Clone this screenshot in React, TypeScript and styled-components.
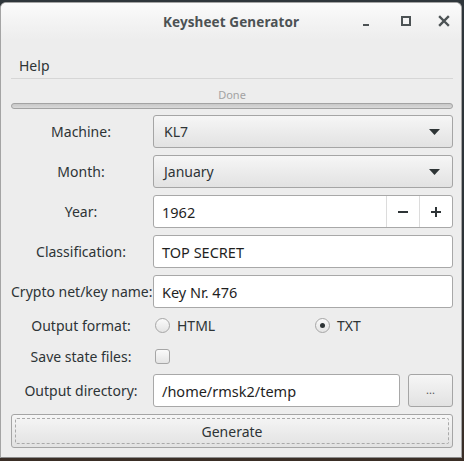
import styled, { createGlobalStyle } from "styled-components";

const GlobalStyle = createGlobalStyle`
  html, body {
    margin: 0;
    padding: 0;
    width: 464px;
    height: 461px;
    overflow: hidden;
    background: linear-gradient(180deg, #2f363b 0%, #2c3236 60%, #3a2e26 100%);
    font-family: "Noto Sans", "DejaVu Sans", sans-serif;
  }
`;

const Window = styled.div`
  margin-top: 2px;
  width: 462px;
  height: 456px;
  box-sizing: border-box;
  border: 1px solid #a4a4a4;
  border-bottom-color: #8c8c8c;
  border-radius: 6px 6px 0 0;
  background: #ededed;
  display: flex;
  flex-direction: column;
  overflow: hidden;
`;

const TitleBar = styled.div`
  height: 37px;
  flex: none;
  display: flex;
  align-items: center;
  justify-content: center;
  position: relative;
  background: linear-gradient(180deg, #fbfbfb 0%, #f2f2f2 60%, #ededed 100%);
`;

const Title = styled.div`
  font-weight: bold;
  font-size: 13.5px;
  color: #4c5254;
  letter-spacing: 0.1px;
`;

const WinButtons = styled.div`
  position: absolute;
  right: 10px;
  top: 11px;
  display: flex;
  gap: 24px;
  align-items: center;
`;

const WinButton = styled.span`
  width: 14px;
  height: 14px;
  display: flex;
  align-items: center;
  justify-content: center;
`;

const MenuBar = styled.div`
  height: 38px;
  flex: none;
  box-sizing: border-box;
  padding: 16px 0 0 18px;
  font-size: 14px;
  color: #2e3436;
`;

const Body = styled.div`
  flex: 1;
  display: flex;
  flex-direction: column;
  padding: 0 8px 0 10px;
`;

const Separator = styled.div`
  height: 1px;
  background: #d6d6d6;
`;

const StatusText = styled.div`
  margin-top: 9px;
  height: 14px;
  line-height: 14px;
  text-align: center;
  font-size: 11px;
  color: #a3a3a3;
`;

const Trough = styled.div`
  margin-top: 1px;
  height: 6px;
  box-sizing: border-box;
  border: 1px solid #a3a3a3;
  border-radius: 3px;
  background: linear-gradient(180deg, #c8c8c8, #d9d9d9);
`;

const Form = styled.div`
  margin-top: 6px;
  display: flex;
  flex-direction: column;
  gap: 7px;
`;

const Row = styled.div<{ $h: number; $pt?: number }>`
  height: ${(p) => p.$h}px;
  display: flex;
  align-items: center;
  box-sizing: border-box;
  padding-top: ${(p) => p.$pt ?? 0}px;
`;

const Label = styled.div`
  width: 140px;
  flex: none;
  margin-right: 2px;
  text-align: center;
  white-space: nowrap;
  font-size: 14px;
  color: #2e3436;
`;

const Combo = styled.div`
  flex: 1;
  height: 100%;
  box-sizing: border-box;
  border: 1px solid #a5a5a5;
  border-radius: 3px;
  background: linear-gradient(180deg, #f6f6f6 0%, #ececec 50%, #e2e2e2 100%);
  display: flex;
  align-items: center;
  justify-content: space-between;
  padding: 0 12px 0 10px;
  font-size: 14px;
  color: #2e3436;
`;

const Entry = styled.div`
  flex: 1;
  height: 100%;
  box-sizing: border-box;
  border: 1px solid #a8a8a8;
  border-radius: 3px;
  background: #ffffff;
  display: flex;
  align-items: center;
  font-size: 14.5px;
  color: #1f1f1f;
  overflow: hidden;
`;

const EntryText = styled.span`
  flex: 1;
  padding-left: 8px;
`;

const SpinButton = styled.div`
  width: 32px;
  height: 100%;
  border-left: 1px solid #dcdcdc;
  display: flex;
  align-items: center;
  justify-content: center;
`;

const RadioGroup = styled.div`
  display: flex;
  padding-left: 2px;
`;

const RadioItem = styled.div<{ $w?: number }>`
  width: ${(p) => (p.$w ? `${p.$w}px` : "auto")};
  display: flex;
  align-items: center;
  gap: 7px;
  font-size: 14px;
  color: #2e3436;
`;

const Radio = styled.span`
  width: 15px;
  height: 15px;
  box-sizing: border-box;
  border: 1px solid #a6a6a6;
  border-radius: 50%;
  background: linear-gradient(180deg, #fafafa, #e4e4e4);
  display: flex;
  align-items: center;
  justify-content: center;
`;

const Dot = styled.span`
  width: 5px;
  height: 5px;
  border-radius: 50%;
  background: #2e3436;
`;

const Check = styled.span`
  margin-left: 2px;
  width: 15px;
  height: 15px;
  box-sizing: border-box;
  border: 1px solid #a6a6a6;
  border-radius: 3px;
  background: linear-gradient(180deg, #fafafa, #e4e4e4);
`;

const Button = styled.div<{ $w?: number }>`
  ${(p) => (p.$w ? `width: ${p.$w}px; flex: none;` : "flex: 1;")}
  height: 100%;
  box-sizing: border-box;
  border: 1px solid #a5a5a5;
  border-radius: 3px;
  background: linear-gradient(180deg, #f6f6f6 0%, #ececec 50%, #e2e2e2 100%);
  display: flex;
  align-items: center;
  justify-content: center;
  font-size: 14px;
  color: #2e3436;
`;

const SmallButton = styled(Button)`
  margin-left: 8px;
  font-size: 11px;
  color: #555;
  padding-bottom: 2px;
`;

const FocusRing = styled.div`
  width: calc(100% - 6px);
  height: calc(100% - 6px);
  box-sizing: border-box;
  border: 1px dashed #a9a9a9;
  border-radius: 2px;
  display: flex;
  align-items: center;
  justify-content: center;
`;

const Arrow = () => (
  <svg width="11" height="6" viewBox="0 0 11 6">
    <path d="M0 0 H11 L5.5 6 Z" fill="#2e3436" />
  </svg>
);

const App = () => {
  return (
    <>
      <GlobalStyle />
      <Window>
        <TitleBar>
          <Title>Keysheet Generator</Title>
          <WinButtons>
            <WinButton>
              <svg width="14" height="14" viewBox="0 0 14 14">
                <rect x="2" y="10" width="6" height="2" fill="#4c5254" />
              </svg>
            </WinButton>
            <WinButton>
              <svg width="14" height="14" viewBox="0 0 14 14">
                <rect x="3" y="3" width="8" height="8" fill="none" stroke="#4c5254" strokeWidth="2" />
              </svg>
            </WinButton>
            <WinButton>
              <svg width="14" height="14" viewBox="0 0 14 14">
                <path d="M3 3 L11 11 M11 3 L3 11" stroke="#4c5254" strokeWidth="2.4" strokeLinecap="square" />
              </svg>
            </WinButton>
          </WinButtons>
        </TitleBar>
        <MenuBar>Help</MenuBar>
        <Body>
          <Separator />
          <StatusText>Done</StatusText>
          <Trough />
          <Form>
            <Row $h={33}>
              <Label>Machine:</Label>
              <Combo>
                <span>KL7</span>
                <Arrow />
              </Combo>
            </Row>
            <Row $h={33}>
              <Label>Month:</Label>
              <Combo>
                <span>January</span>
                <Arrow />
              </Combo>
            </Row>
            <Row $h={33}>
              <Label>Year:</Label>
              <Entry>
                <EntryText>1962</EntryText>
                <SpinButton>
                  <svg width="12" height="12" viewBox="0 0 12 12">
                    <rect x="1" y="5" width="10" height="2" fill="#2e3436" />
                  </svg>
                </SpinButton>
                <SpinButton>
                  <svg width="12" height="12" viewBox="0 0 12 12">
                    <rect x="1" y="5" width="10" height="2" fill="#2e3436" />
                    <rect x="5" y="1" width="2" height="10" fill="#2e3436" />
                  </svg>
                </SpinButton>
              </Entry>
            </Row>
            <Row $h={33}>
              <Label>Classification:</Label>
              <Entry>
                <EntryText>TOP SECRET</EntryText>
              </Entry>
            </Row>
            <Row $h={33}>
              <Label>Crypto net/key name:</Label>
              <Entry>
                <EntryText>Key Nr. 476</EntryText>
              </Entry>
            </Row>
            <Row $h={20}>
              <Label>Output format:</Label>
              <RadioGroup>
                <RadioItem $w={160}>
                  <Radio />
                  HTML
                </RadioItem>
                <RadioItem>
                  <Radio>
                    <Dot />
                  </Radio>
                  TXT
                </RadioItem>
              </RadioGroup>
            </Row>
            <Row $h={25} $pt={4}>
              <Label>Save state files:</Label>
              <Check />
            </Row>
            <Row $h={33}>
              <Label>Output directory:</Label>
              <Entry>
                <EntryText>/home/rmsk2/temp</EntryText>
              </Entry>
              <SmallButton $w={45}>...</SmallButton>
            </Row>
            <Row $h={34}>
              <Button>
                <FocusRing>Generate</FocusRing>
              </Button>
            </Row>
          </Form>
        </Body>
      </Window>
    </>
  );
};

export default App;
